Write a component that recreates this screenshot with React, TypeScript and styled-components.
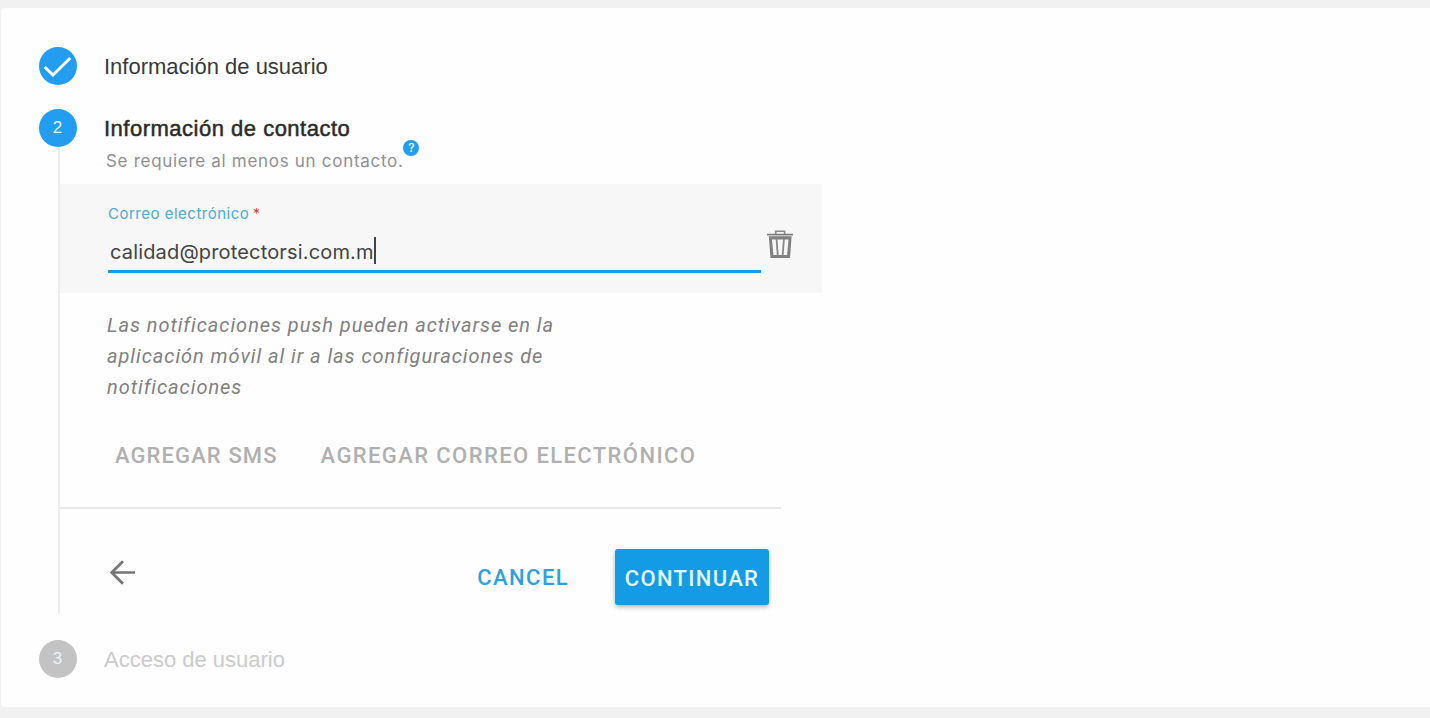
import React from "react";
import styled, { createGlobalStyle } from "styled-components";

const App = () => {
  return (
    <>
      <GlobalStyle />
      <Card>
        <StepHeader>
          <StepCircle $color='#229df0'>
            <svg width='37' height='37' viewBox='0 0 37 37' fill='none'>
              <path d='M5.7 19l8.3 8L31.2 10' stroke='#fff' strokeWidth='3' />
            </svg>
          </StepCircle>
          <StepTitle>Información de usuario</StepTitle>
        </StepHeader>
        <StepHeader $top={24}>
          <StepCircle $color='#229df0'>2</StepCircle>
          <StepTitle $active>Información de contacto</StepTitle>
        </StepHeader>

        <StepBody>
          <Hint>
            <HintText>Se requiere al menos un contacto.</HintText>
            <Help>?</Help>
          </Hint>

          <ContactRow>
            <Field>
              <FieldLabel>
                Correo electrónico <Required>*</Required>
              </FieldLabel>
              <FieldValue>
                <span>calidad@protectorsi.com.m</span>
                <Caret />
              </FieldValue>
            </Field>
            <TrashButton aria-label='Eliminar'>
              <svg width='26' height='28' viewBox='0 0 26 28' fill='none'>
                <path
                  d='M8.7 4V1.2H17.6V4'
                  stroke='#888'
                  strokeWidth='1.6'
                />
                <path d='M0 4.6H26' stroke='#808080' strokeWidth='1.8' />
                <path
                  fillRule='evenodd'
                  fill='#808080'
                  d='M1.8 6.2H24.6L23 28H3.5zM5 9.4L6.4 25H20.1L21.5 9.4z'
                />
                <path
                  d='M9.5 8.5L10.8 26M17 8.5L15.6 26'
                  stroke='#888'
                  strokeWidth='1.8'
                />
              </svg>
            </TrashButton>
          </ContactRow>

          <Note>
            Las notificaciones push pueden activarse en la
            <br />
            aplicación móvil al ir a las configuraciones de
            <br />
            notificaciones
          </Note>

          <AddActions>
            <TextButton $color='#b0b0b0' $spacing={1.1}>
              AGREGAR SMS
            </TextButton>
            <TextButton $color='#b0b0b0' $spacing={1.4}>
              AGREGAR CORREO ELECTRÓNICO
            </TextButton>
          </AddActions>

          <Footer>
            <BackButton aria-label='Atrás'>
              <svg width='25' height='25' viewBox='0 0 25 25' fill='none'>
                <path
                  d='M25 12.5H2M13 1.2L1.7 12.5L13 23.8'
                  stroke='#757575'
                  strokeWidth='2.7'
                />
              </svg>
            </BackButton>
            <TextButton $color='#2f9fe0' $spacing={1.4}>
              CANCEL
            </TextButton>
            <PrimaryButton>CONTINUAR</PrimaryButton>
          </Footer>
        </StepBody>

        <StepHeader $top={26}>
          <StepCircle $color='#c3c3c3'>3</StepCircle>
          <StepTitle $disabled>Acceso de usuario</StepTitle>
        </StepHeader>
      </Card>
    </>
  );
};

export default App;

const GlobalStyle = createGlobalStyle`
  * {
    box-sizing: border-box;
  }

  body {
    margin: 0;
    background: #f1f1f1;
    font-family: Inter, "Liberation Sans", sans-serif;
  }

  button {
    border: 0;
    padding: 0;
    background: none;
    font-family: Roboto, "Liberation Sans", sans-serif;
  }

  svg {
    display: block;
  }
`;

const Card = styled.div`
  height: 699px;
  margin: 8px 0 0 1px;
  padding: 39px 0 0 38px;
  background: #fefefe;
  border-radius: 4px 0 0 4px;
`;

const StepHeader = styled.div<{ $top?: number }>`
  display: flex;
  align-items: center;
  gap: 27px;
  height: 38px;
  margin-top: ${({ $top }) => $top || 0}px;
`;

const StepCircle = styled.div<{ $color: string }>`
  display: flex;
  align-items: center;
  justify-content: center;
  width: 38px;
  height: 38px;
  padding-right: 1px;
  border-radius: 50%;
  background: ${({ $color }) => $color};
  color: #e8f4fc;
  font: 17px "Liberation Sans", sans-serif;
`;

const StepTitle = styled.div<{ $active?: boolean; $disabled?: boolean }>`
  padding-top: 1px;
  color: ${({ $active, $disabled }) =>
    $disabled ? "#cbcbcb" : $active ? "#2b2b2b" : "#3a3a3a"};
  font: 22px "Liberation Sans", sans-serif;
  letter-spacing: ${({ $active }) => ($active ? "0.5px" : "0")};
  -webkit-text-stroke: ${({ $active }) => ($active ? "0.5px" : "0")};
`;

const StepBody = styled.div`
  width: 764px;
  height: 467px;
  margin-left: 19px;
  border-left: 2px solid #ececec;
`;

const Hint = styled.div`
  display: flex;
  height: 37px;
  padding-left: 46px;
`;

const HintText = styled.span`
  margin-top: 3px;
  color: #909090;
  font-size: 17px;
  line-height: 22px;
  letter-spacing: 0.7px;
`;

const Help = styled.span`
  width: 16px;
  height: 16px;
  margin-top: -7px;
  border-radius: 50%;
  background: #229df0;
  color: #fff;
  font-size: 12px;
  font-weight: 500;
  line-height: 16px;
  text-align: center;
`;

const ContactRow = styled.div`
  display: flex;
  height: 109px;
  padding: 19px 0 0 48px;
  background: #f7f7f7;
`;

const Field = styled.div`
  width: 653px;
  height: 70px;
  border-bottom: 3px solid #169fe9;
`;

const FieldLabel = styled.div`
  color: #4da9de;
  font-size: 15px;
  line-height: 22px;
  letter-spacing: 0.5px;
`;

const Required = styled.span`
  margin-left: -1px;
  color: #d8432f;
  font-size: 14px;
`;

const FieldValue = styled.div`
  display: flex;
  align-items: center;
  height: 28px;
  margin-top: 12px;
  padding-left: 2px;
  color: #444;
  font-size: 20px;
  letter-spacing: 0.16px;

  span:first-child {
    padding-top: 1px;
  }
`;

const Caret = styled.span`
  width: 2px;
  height: 27px;
  margin-bottom: 1px;
  background: #444;
`;

const TrashButton = styled.button`
  width: 26px;
  height: 28px;
  margin: 27px 0 0 6px;
`;

const Note = styled.p`
  height: 93px;
  margin: 17px 0 0 47px;
  color: #808080;
  font-family: Roboto, "Liberation Sans", sans-serif;
  font-size: 20px;
  font-style: italic;
  line-height: 31px;
  letter-spacing: 0.95px;
`;

const AddActions = styled.div`
  display: flex;
  align-items: center;
  gap: 43px;
  width: 721px;
  height: 106px;
  padding: 2px 0 0 55px;
  border-bottom: 2px solid #e9e9e9;
`;

const TextButton = styled.button<{ $color: string; $spacing: number }>`
  color: ${({ $color }) => $color};
  font-size: 22px;
  font-weight: 500;
  letter-spacing: ${({ $spacing }) => $spacing}px;
  line-height: 26px;
  white-space: nowrap;
`;

const Footer = styled.div`
  display: flex;
  align-items: center;
  width: 709px;
  height: 57px;
  margin-top: 39px;
  padding-left: 50px;

  ${TextButton} {
    padding-top: 3px;
  }
`;

const BackButton = styled.button`
  width: 25px;
  height: 25px;
  margin: -8px auto 0 0;
`;

const PrimaryButton = styled.button`
  width: 154px;
  height: 56px;
  margin-left: 46px;
  padding-top: 3px;
  border-radius: 3px;
  background: #139be6;
  box-shadow: 0 2px 5px rgba(0, 0, 0, 0.3);
  color: #e4f4fd;
  font-size: 22px;
  font-weight: 500;
  letter-spacing: 1.3px;
`;
